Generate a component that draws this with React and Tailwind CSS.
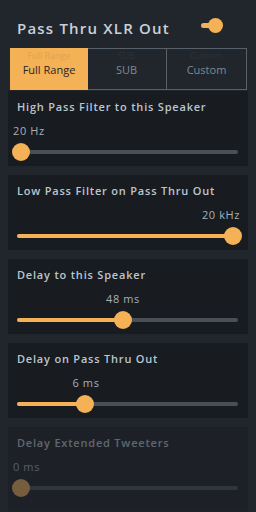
import React from "react";

function Slider({ p, min0 }) {
  const center = 4 + p * 212;
  return (
    <div className="relative mx-[9px] mr-[10px] h-[18px]">
      <div className="absolute left-0 right-0 top-[7px] h-[4px] rounded-full bg-[#4a4e55]" />
      {!min0 && (
        <div
          className="absolute left-0 top-[7px] h-[4px] rounded-full bg-[#f4b155]"
          style={{ width: center + "px" }}
        />
      )}
      <div
        className="absolute top-0 h-[18px] w-[18px] rounded-full bg-[#f4b155]"
        style={{ left: center - 9 + "px" }}
      />
    </div>
  );
}

function Card({ title, value, labelStyle, p, min0, disabled, last }) {
  return (
    <div
      className={
        "mx-[8px] flex flex-col bg-[#181b20] " +
        (last ? "h-[85px] " : "h-[75px] ") +
        (disabled ? "opacity-40" : "")
      }
    >
      <div className="pl-[9px] pt-[8px] text-[11px] leading-[16px] font-semibold tracking-[0.8px] text-[#bcc6cf]">
        {title}
      </div>
      <div className="relative mt-[9px] h-[14px]">
        <span
          className="absolute top-0 text-[11px] leading-[14px] tracking-[0.6px] text-[#a7b0b8] whitespace-nowrap"
          style={labelStyle}
        >
          {value}
        </span>
      </div>
      <div className="mt-[5px]">
        <Slider p={p} min0={min0} />
      </div>
    </div>
  );
}

export default function App() {
  return (
    <div
      className="w-[256px] h-[512px] overflow-hidden bg-[#21262d] flex flex-col"
      style={{ fontFamily: '"Open Sans", "DejaVu Sans", sans-serif' }}
    >
      <div className="h-[48px] flex items-start justify-between pl-[17px] pr-[33px] pt-[17px]">
        <div className="text-[15px] leading-[22px] font-semibold tracking-[1.2px] text-[#c8d1d9]">
          Pass Thru XLR Out
        </div>
        <div className="relative mt-[1px] h-[15px] w-[22px]">
          <div className="absolute left-0 top-[5px] h-[5px] w-[14px] rounded-full bg-[#f4b155]" />
          <div className="absolute right-0 top-0 h-[15px] w-[15px] rounded-full bg-[#f4b155]" />
        </div>
      </div>
      <div className="mx-[10px] mr-[9px] h-[42px] flex border border-[#56616b]">
        <div className="relative w-[78px] flex items-center justify-center bg-[#f4b155] text-[11px] text-[#262626] -m-px">
          <span className="absolute top-[3px] text-[9px] leading-[10px] text-[#262626] opacity-10">Full Range</span>
          <span className="mt-[3px]">Full Range</span>
        </div>
        <div className="relative flex-1 flex items-center justify-center border-r border-[#56616b] text-[11px] text-[#7e8993]">
          <span className="absolute top-[2px] text-[9px] leading-[10px] opacity-10">SUB</span>
          <span className="mt-[3px]">SUB</span>
        </div>
        <div className="relative flex-1 flex items-center justify-center text-[11px] text-[#7e8993]">
          <span className="absolute top-[2px] text-[9px] leading-[10px] opacity-10">Custom</span>
          <span className="mt-[3px]">Custom</span>
        </div>
      </div>
      <div className="mt-px flex flex-col gap-[9px]">
        <Card
          title="High Pass Filter to this Speaker"
          value="20 Hz"
          labelStyle={{ left: "5px" }}
          p={0}
          min0
        />
        <Card
          title="Low Pass Filter on Pass Thru Out"
          value="20 kHz"
          labelStyle={{ right: "8px" }}
          p={1}
        />
        <Card
          title="Delay to this Speaker"
          value="48 ms"
          labelStyle={{ left: "115px", transform: "translateX(-50%)" }}
          p={0.48}
        />
        <Card
          title="Delay on Pass Thru Out"
          value="6 ms"
          labelStyle={{ left: "78px", transform: "translateX(-50%)" }}
          p={0.3}
        />
        <Card
          title="Delay Extended Tweeters"
          value="0 ms"
          labelStyle={{ left: "5px" }}
          p={0}
          min0
          disabled
          last
        />
      </div>
    </div>
  );
}
